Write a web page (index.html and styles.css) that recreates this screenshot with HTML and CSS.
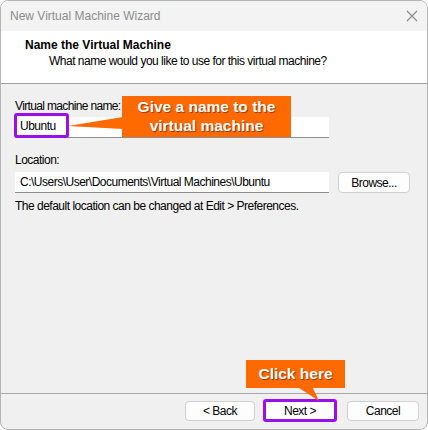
FILE: index.html
```html
<!DOCTYPE html>
<html>
<head>
<meta charset="utf-8">
<link rel="stylesheet" href="styles.css">
</head>
<body>
<div class="window">
  <div class="titlebar">
    <span class="title">New Virtual Machine Wizard</span>
    <svg class="close" width="12" height="12" viewBox="0 0 12 12"><path d="M1 1 L11 11 M11 1 L1 11" stroke="#8a8a8a" stroke-width="1.1" fill="none"/></svg>
  </div>
  <div class="header">
    <div class="h-title">Name the Virtual Machine</div>
    <div class="h-sub">What name would you like to use for this virtual machine?</div>
  </div>
  <div class="content">
    <div class="label first">Virtual machine name:</div>
    <div class="field name-field"><span class="name-value">Ubuntu</span></div>
    <div class="label loc-label">Location:</div>
    <div class="loc-row">
      <div class="field">C:\Users\User\Documents\Virtual Machines\Ubuntu</div>
      <button class="btn browse">Browse...</button>
    </div>
    <div class="note">The default location can be changed at Edit &gt; Preferences.</div>
  </div>
  <div class="footer">
    <button class="btn">&lt; Back</button>
    <button class="btn next">Next &gt;</button>
    <button class="btn">Cancel</button>
  </div>

  <svg class="pointers" width="428" height="430" viewBox="0 0 428 430">
    <polygon points="68,126 123,117 123,129" fill="#ff6a00"/>
    <polygon points="296,386 312,386 319,401" fill="#ff6a00"/>
  </svg>
  <div class="callout c1">Give a name to the<br>virtual machine</div>
  <div class="callout c2">Click here</div>
</div>
</body>
</html>
```
FILE: styles.css
```css
* { box-sizing: border-box; }
html, body { margin: 0; padding: 0; background: #ffffff; }
body { width: 428px; height: 430px; overflow: hidden; }
.window {
  position: relative;
  width: 428px;
  height: 430px;
  border: 1px solid #b5b5b5;
  border-radius: 8px;
  overflow: hidden;
  display: flex;
  flex-direction: column;
  background: #f0f0f0;
  font-family: "Liberation Sans", Arial, sans-serif;
  font-size: 12px;
  letter-spacing: -0.5px;
  color: #000;
}
.titlebar {
  height: 30px;
  background: #f3f3f3;
  display: flex;
  align-items: center;
  justify-content: space-between;
  padding: 0 9px 0 9px;
  letter-spacing: 0;
}
.title { color: #8c8c8c; font-size: 12px; }
.header {
  height: 53px;
  background: #fff;
  border-bottom: 1px solid #a0a0a0;
  padding: 6px 0 0 24px;
  line-height: 16px;
}
.h-title { font-weight: bold; color: #000; letter-spacing: 0; }
.h-sub { padding-left: 24px; color: #000; }
.content {
  flex: 1;
  padding: 14px 0 0 14px;
  line-height: 16px;
}
.label.first { letter-spacing: -0.65px; }
.label.loc-label { margin-top: 14px; }
.field {
  width: 314px;
  height: 21px;
  background: #fff;
  border-bottom: 1px solid #8f8f8f;
  padding: 2px 0 0 5px;
  line-height: 16px;
  white-space: nowrap;
}
.name-field {
  margin-top: 3px;
  position: relative;
}
.name-value {
  position: absolute;
  left: -1px;
  top: -4px;
  width: 55px;
  height: 25px;
  border: 3px solid #9a10ea;
  border-radius: 3px;
  padding: 2px 0 0 3px;
}
.loc-row {
  display: flex;
  align-items: flex-start;
  gap: 9px;
  margin-top: 4px;
}
.btn {
  font-family: "Liberation Sans", Arial, sans-serif;
  font-size: 12px;
  letter-spacing: -0.5px;
  color: #000;
  background: #fdfdfd;
  border: 1px solid #d0d0d0;
  border-radius: 4px;
  height: 21px;
  width: 71px;
  padding: 0;
  line-height: 18px;
}
.browse { width: 72px; }
.note { margin-top: 5px; }
.footer {
  height: 36px;
  border-top: 1px solid #a8a8a8;
  display: flex;
  justify-content: flex-end;
  align-items: center;
  padding: 0 8px 2px 0;
  gap: 8px;
}
.footer .btn { height: 20px; width: 70px; }
.footer .btn:last-child { margin-left: 2px; width: 72px; }
.footer .btn.next {
  width: 74px;
  height: 23px;
  border: 3px solid #9a10ea;
  border-radius: 3px;
  background: #fff;
}
.pointers { position: absolute; left: -1px; top: -1px; }
.callout {
  position: absolute;
  background: #ff6a00;
  color: #fff;
  font-family: "Liberation Sans", Arial, sans-serif;
  font-weight: bold;
  font-size: 15.5px;
  letter-spacing: 0;
  text-align: center;
  text-shadow: 1px 1px 1px rgba(0,0,0,0.45);
}
.c1 {
  left: 121px;
  top: 95px;
  width: 169px;
  height: 41px;
  line-height: 19px;
  padding-top: 1px;
}
.c2 {
  left: 245px;
  top: 359px;
  width: 99px;
  height: 28px;
  line-height: 27px;
}
```
